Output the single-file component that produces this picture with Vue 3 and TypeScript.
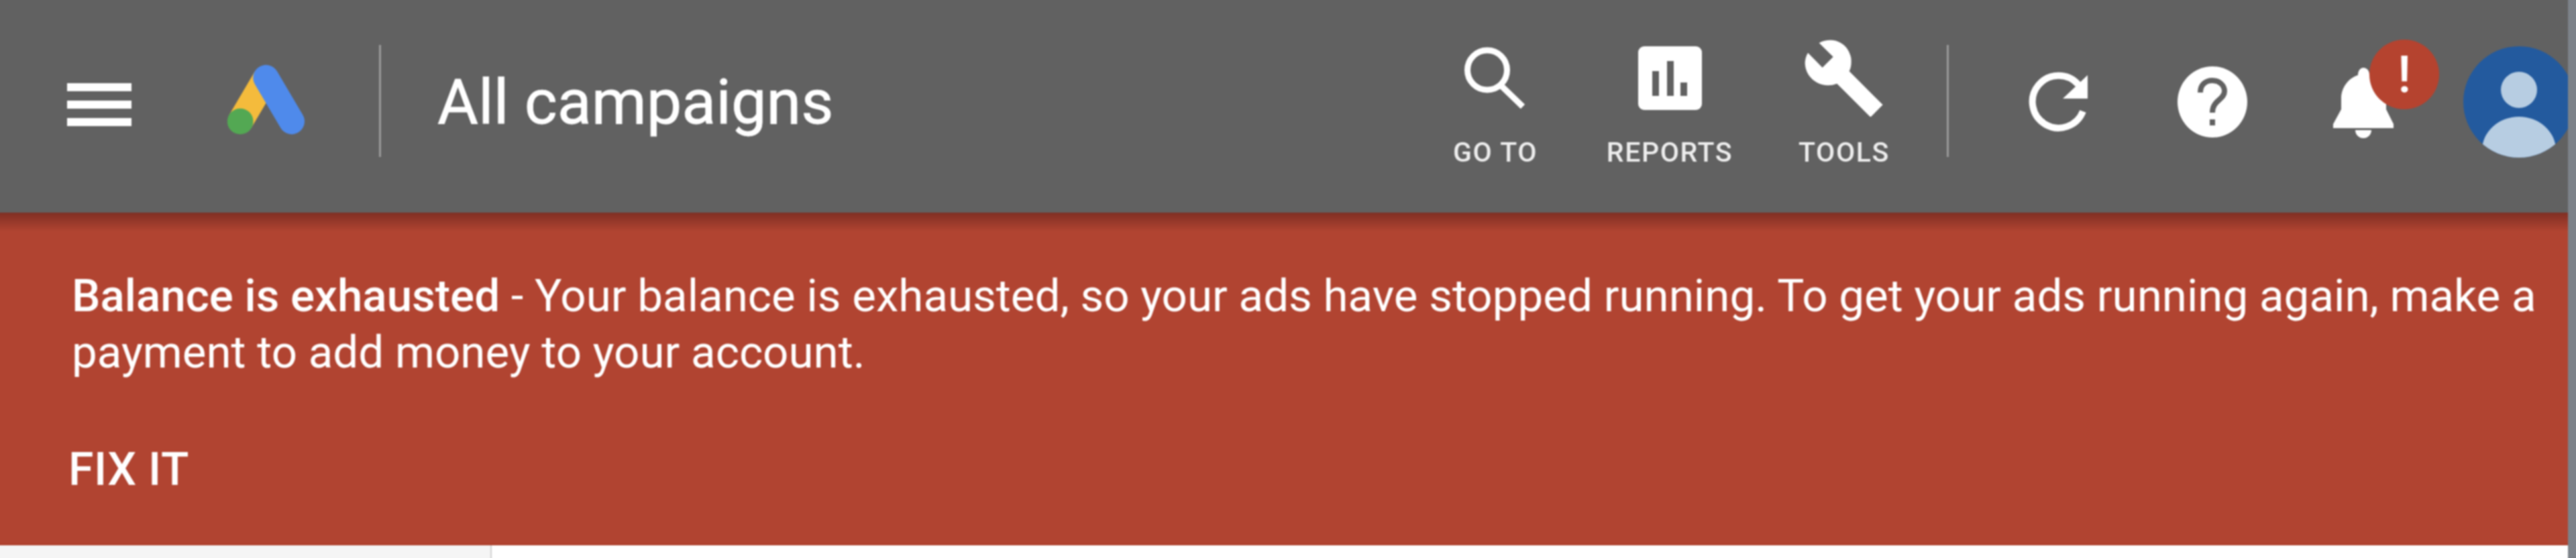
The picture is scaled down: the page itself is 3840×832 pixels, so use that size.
<script setup lang="ts">
interface NavItem {
  id: 'goto' | 'reports' | 'tools'
  label: string
}

const navItems: NavItem[] = [
  { id: 'goto', label: 'GO TO' },
  { id: 'reports', label: 'REPORTS' },
  { id: 'tools', label: 'TOOLS' },
]
</script>

<template>
  <div class="page">
    <div class="main">
      <header class="topbar">
        <div class="menu-icon">
          <span></span>
          <span></span>
          <span></span>
        </div>
        <svg class="logo" viewBox="115 50 350 315">
          <line x1="175" y1="305" x2="290" y2="110" stroke="#f4bb3c" stroke-width="115" />
          <line x1="290" y1="110" x2="405" y2="305" stroke="#4f8aeb" stroke-width="115" stroke-linecap="round" />
          <circle cx="175" cy="305" r="58" fill="#53a853" />
        </svg>
        <div class="divider title-divider"></div>
        <div class="title">All campaigns</div>

        <nav class="nav">
          <div v-for="item in navItems" :key="item.id" class="nav-item">
            <div class="nav-icon">
              <svg v-if="item.id === 'goto'" width="92" height="92" viewBox="0 0 92 92">
                <circle cx="34" cy="34.5" r="29.5" fill="none" stroke="#fff" stroke-width="9" />
                <line x1="55" y1="58" x2="87" y2="89" stroke="#fff" stroke-width="9" />
              </svg>
              <svg v-else-if="item.id === 'reports'" width="95" height="95" viewBox="0 0 95 95">
                <rect width="95" height="95" rx="9" fill="#fff" />
                <rect x="21" y="37" width="10" height="37" fill="#616161" />
                <rect x="43" y="22" width="10" height="52" fill="#616161" />
                <rect x="63" y="54" width="10" height="20" fill="#616161" />
              </svg>
              <svg v-else width="118" height="116" viewBox="90 50 354 348">
                <path
                  fill="#fff"
                  d="M155 68 Q190 50 230 58 Q285 75 298 135 Q302 170 290 195 L440 345 L385 400 L235 250 Q190 268 145 245 Q95 215 92 160 Q92 135 105 112 L170 178 L218 130 Z"
                />
              </svg>
            </div>
            <span class="nav-label">{{ item.label }}</span>
          </div>
        </nav>

        <div class="divider tools-divider"></div>

        <div class="action refresh">
          <svg width="120" height="120" viewBox="0 0 120 120">
            <path d="M95 76 A39 39 0 1 1 88 36" fill="none" stroke="#fff" stroke-width="10" />
            <polygon points="102,22 102,57 65,57" fill="#fff" />
          </svg>
        </div>
        <div class="action">
          <svg width="104" height="106" viewBox="0 0 104 106">
            <ellipse cx="52" cy="53" rx="52" ry="53" fill="#fff" />
            <path d="M34 39 C34 27 42 21 52 21 C62 21 70 28 70 37 C70 50 52 50 52 69" fill="none" stroke="#616161" stroke-width="8" />
            <rect x="48" y="79" width="8" height="9" fill="#616161" />
          </svg>
        </div>
        <div class="action bell">
          <svg width="90" height="105" viewBox="0 0 90 105">
            <path
              fill="#fff"
              d="M45 0 C51 0 54 5 54 11 C70 16 79 30 79 46 L79 62 L90 84 L90 90 L0 90 L0 84 L12 62 L12 46 C12 30 22 16 37 11 C37 5 40 0 45 0 Z"
            />
            <path fill="#fff" d="M33 93 H57 A12 12 0 0 1 33 93 Z" />
          </svg>
          <span class="badge">!</span>
        </div>
        <svg class="avatar" width="166" height="166" viewBox="0 0 166 166">
          <clipPath id="avatar-clip">
            <circle cx="83" cy="83" r="83" />
          </clipPath>
          <g clip-path="url(#avatar-clip)">
            <rect width="166" height="166" fill="#235a9e" />
            <circle cx="83" cy="65" r="27" fill="#b7cde2" />
            <ellipse cx="83" cy="155" rx="55" ry="50" fill="#b7cde2" />
          </g>
        </svg>
      </header>

      <section class="banner">
        <p class="banner-text">
          <strong>Balance is exhausted</strong> - Your balance is exhausted, so your ads have stopped running. To get your ads running again, make a payment to add money to your account.
        </p>
        <a class="fix-it">FIX IT</a>
      </section>

      <div class="content">
        <div class="sidebar"></div>
      </div>
    </div>
    <div class="edge"></div>
  </div>
</template>

<style>
html,
body {
  margin: 0;
  overflow: hidden;
  background: #fff;
}
</style>

<style scoped>
/* 4px bleed on every side so the soft blur doesn't fade at the window edge */
.page {
  display: flex;
  width: 3848px;
  height: 840px;
  margin: -4px;
  overflow: hidden;
  font-family: Roboto, 'Liberation Sans', sans-serif;
  filter: blur(0.8px);
}

.main {
  flex: 1;
  min-width: 0;
  display: flex;
  flex-direction: column;
  overflow: hidden;
}

.edge {
  width: 16px;
  flex-shrink: 0;
  background: #7c8289;
}

.topbar {
  height: 321px;
  flex-shrink: 0;
  box-sizing: border-box;
  display: flex;
  align-items: center;
  padding: 4px 0 0 104px;
  background: #616161;
  color: #fff;
}

.menu-icon {
  width: 96px;
  height: 64px;
  display: flex;
  flex-direction: column;
  justify-content: space-between;
  margin-top: -6px;
}

.menu-icon span {
  height: 12px;
  background: #fff;
}

.logo {
  width: 117px;
  height: 105px;
  margin-left: 142px;
  margin-top: -20px;
  flex-shrink: 0;
}

.divider {
  width: 3px;
  height: 167px;
  background: #9a9a9a;
  flex-shrink: 0;
  margin-top: -16px;
}

.title-divider {
  margin-left: 110px;
}

.title {
  margin-left: 84px;
  margin-top: -14px;
  font-size: 93.6px;
  -webkit-text-stroke: 0.8px #fff;
  line-height: 100px;
  white-space: nowrap;
}

.nav {
  display: flex;
  margin-left: auto;
  margin-top: -9px;
}

.nav-item {
  width: 260px;
  display: flex;
  flex-direction: column;
  align-items: center;
}

.nav-icon {
  height: 116px;
  display: flex;
  align-items: center;
  justify-content: center;
}

.nav-label {
  margin-top: 30px;
  font-size: 41px;
  line-height: 46px;
  font-weight: 500;
  letter-spacing: 1.6px;
  color: #eee;
  white-space: nowrap;
}

.tools-divider {
  margin-left: 23px;
  margin-right: 51px;
}

.action {
  position: relative;
  width: 228px;
  display: flex;
  justify-content: center;
  margin-top: -13px;
  flex-shrink: 0;
}

.refresh {
  margin-top: -17px;
}

.bell {
  width: 222px;
  margin-top: -11px;
}

.badge {
  position: absolute;
  left: 120px;
  top: -42px;
  width: 104px;
  height: 104px;
  border-radius: 50%;
  background: #b5432f;
  color: #fff;
  display: flex;
  align-items: center;
  justify-content: center;
  font-size: 76px;
  font-weight: 500;
  line-height: 1;
}

.avatar {
  flex-shrink: 0;
  margin-left: 38px;
  margin-right: -10px;
  margin-top: -13px;
}

.banner {
  flex: 1;
  min-height: 0;
  padding: 82px 40px 0 111px;
  background: linear-gradient(#7f2f24, #b14431 28px) #b14431;
  border-bottom: 2px solid #ab3a26;
  color: #fff;
  box-sizing: border-box;
}

.banner-text {
  margin: 0;
  font-size: 67.3px;
  line-height: 84px;
}

.banner-text strong {
  font-weight: 500;
}

.fix-it {
  display: block;
  margin-top: 91px;
  margin-left: -5px;
  font-size: 68px;
  line-height: 84px;
  font-weight: 500;
  letter-spacing: 0.5px;
}

.content {
  height: 23px;
  flex-shrink: 0;
  background: #fff;
}

.sidebar {
  width: 735px;
  height: 100%;
  background: #f5f5f5;
  border-right: 2px solid #d0d0d0;
}
</style>
